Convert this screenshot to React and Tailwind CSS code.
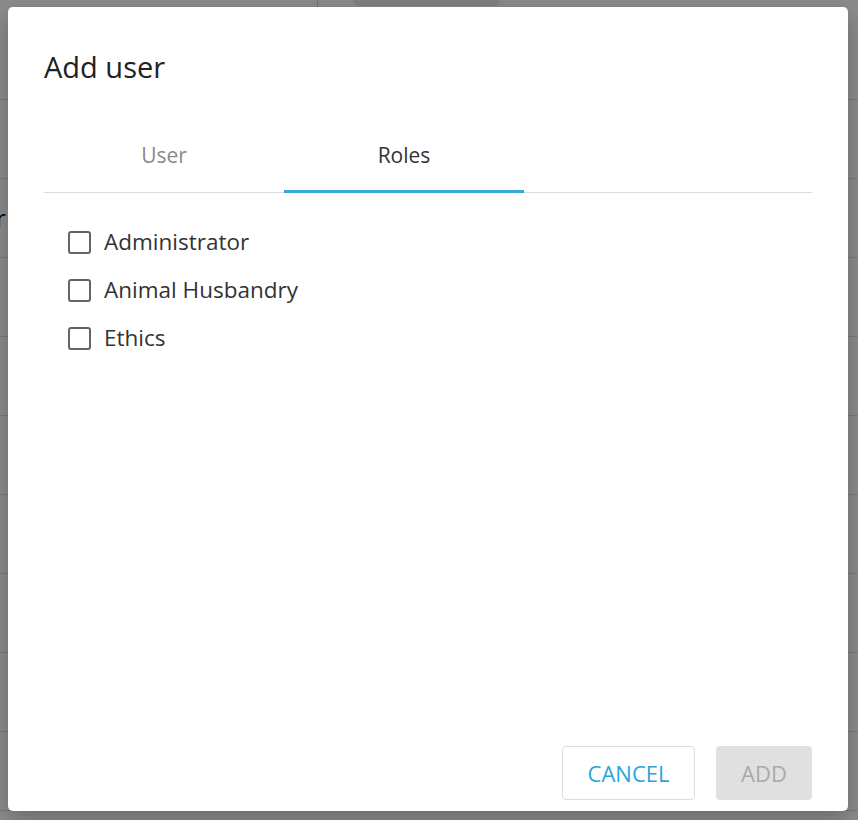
import { useState } from "react"

const roles = ["Administrator", "Animal Husbandry", "Ethics"]

function Checkbox({ label, checked, onToggle }) {
    return (
        <label className="flex items-center h-[48px] cursor-pointer">
            <span className={"w-[23px] h-[23px] border-2 rounded-[3px] flex items-center justify-center " + (checked ? "border-[#2aa5d8] bg-[#2aa5d8]" : "border-[#646464] bg-white")} onClick={onToggle}>
                {checked && (
                    <svg width="14" height="14" viewBox="0 0 24 24" fill="none" stroke="white" strokeWidth="3"><path d="M4 12l5 5L20 6" /></svg>
                )}
            </span>
            <span className="ml-[13px] text-[22.5px] text-[#333]">{label}</span>
        </label>
    )
}

export default function App() {

    const [tab, setTab] = useState("roles")
    const [checked, setChecked] = useState({})

    const toggle = (r) => setChecked({ ...checked, [r]: !checked[r] })

    const rows = [0, 1, 2, 3, 4, 5, 6, 7, 8]

    return (
        <div className="relative w-[858px] h-[820px] overflow-hidden bg-white font-['Open_Sans',sans-serif]">

            {/* page behind the modal */}
            <div className="flex h-[100px] border-b border-[#e2e2e2]">
                <div className="w-[318px] h-[7px] border-r border-[#d0d0d0]"></div>
                <div className="ml-[35px] w-[147px] h-[6px] bg-[#ececec] rounded-b-[14px]"></div>
            </div>
            {rows.map((i) => (
                <div key={i} className="h-[79px] border-b border-[#e2e2e2] flex items-center text-[24px] text-[#111]">
                    {i === 1 && <span className="-ml-[4px]">r</span>}
                </div>
            ))}

            {/* overlay */}
            <div className="absolute inset-0 bg-black/[0.45] pl-[8px] pt-[7px]">
                <div className="w-[840px] h-[804px] bg-white rounded-[5px] shadow-[0_8px_24px_rgba(0,0,0,0.25)] flex flex-col px-[36px] pt-[43px] pb-[11px]">

                    <h2 className="text-[29px] leading-[33px] text-[#222]">Add user</h2>

                    <div className="mt-[39px] flex border-b border-[#dcdcdc]">
                        <button className={"w-[240px] h-[71px] -mb-px text-[21px] border-b-[3px] " + (tab === "user" ? "border-[#35a9d9] text-[#333]" : "border-transparent text-[#8a8a8a]")} onClick={() => setTab("user")}>User</button>
                        <button className={"w-[240px] h-[71px] -mb-px text-[21px] border-b-[3px] " + (tab === "roles" ? "border-[#35a9d9] text-[#333]" : "border-transparent text-[#8a8a8a]")} onClick={() => setTab("roles")}>Roles</button>
                    </div>

                    {tab === "roles" ? (
                        <div className="pl-[24px] pt-[25px]">
                            {roles.map((r) => (
                                <Checkbox key={r} label={r} checked={!!checked[r]} onToggle={() => toggle(r)} />
                            ))}
                        </div>
                    ) : (
                        <div className="pt-[25px]"></div>
                    )}

                    <div className="mt-auto flex justify-end gap-[21px]">
                        <button className="w-[133px] h-[54px] border border-[#dcdcdc] rounded-[4px] text-[22px] text-[#2aa5d8] bg-white">CANCEL</button>
                        <button className="w-[96px] h-[54px] rounded-[4px] text-[22px] text-[#a9a9a9] bg-[#e0e0e0]" disabled>ADD</button>
                    </div>
                </div>
            </div>
        </div>
    )
}
